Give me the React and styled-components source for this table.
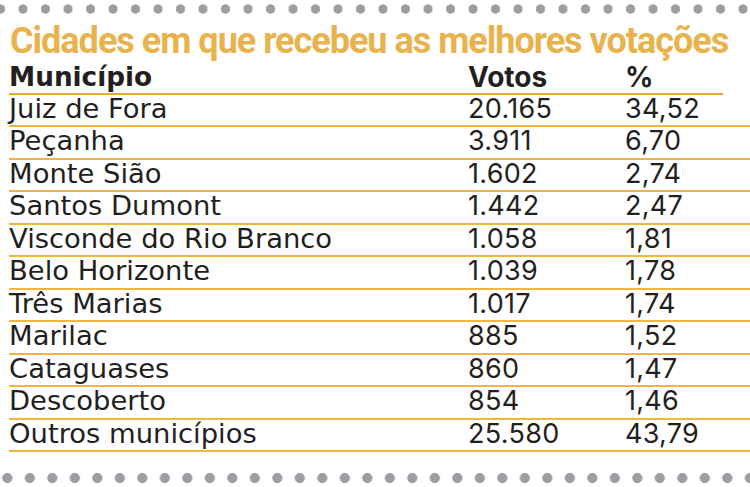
import styled, { createGlobalStyle } from "styled-components";

const GlobalStyle = createGlobalStyle`
  html, body {
    margin: 0;
    padding: 0;
    background: #ffffff;
  }
  body {
    font-family: Inter, "Liberation Sans", sans-serif;
    color: #231f20;
  }
`;

const rows = [
  { city: "Juiz de Fora", votes: "20.165", pct: "34,52" },
  { city: "Peçanha", votes: "3.911", pct: "6,70" },
  { city: "Monte Sião", votes: "1.602", pct: "2,74" },
  { city: "Santos Dumont", votes: "1.442", pct: "2,47" },
  { city: "Visconde do Rio Branco", votes: "1.058", pct: "1,81" },
  { city: "Belo Horizonte", votes: "1.039", pct: "1,78" },
  { city: "Três Marias", votes: "1.017", pct: "1,74" },
  { city: "Marilac", votes: "885", pct: "1,52" },
  { city: "Cataguases", votes: "860", pct: "1,47" },
  { city: "Descoberto", votes: "854", pct: "1,46" },
  { city: "Outros municípios", votes: "25.580", pct: "43,79" },
];

const App = () => {
  return (
    <Wrapper>
      <GlobalStyle />
      <Dots $offset={-10.75} $radius={4.9} />
      <Title>Cidades em que recebeu as melhores votações</Title>
      <Table>
        <HeadRow>
          <Cell $head>Município</Cell>
          <Cell $head $numeric>Votos</Cell>
          <Cell $head $numeric>%</Cell>
        </HeadRow>
        {rows.map((row) => {
          const { city, votes, pct } = row;

          return (
            <Row key={city}>
              <Cell>{city}</Cell>
              <Cell $numeric>{votes}</Cell>
              <Cell $numeric>{pct}</Cell>
            </Row>
          );
        })}
      </Table>
      <Dots $offset={-3.95} $radius={5.3} $bottom />
    </Wrapper>
  );
};

const Wrapper = styled.main`
  width: 750px;
  height: 487px;
  overflow: hidden;
`;

// gray dotted rule, top and bottom
const Dots = styled.div`
  height: 18px;
  margin-top: ${(p) => (p.$bottom ? "17px" : "0")};
  background-image: radial-gradient(
    circle at center,
    #9d9da3 ${(p) => p.$radius - 0.5}px,
    transparent ${(p) => p.$radius}px
  );
  background-size: 22.5px 18px;
  background-repeat: repeat-x;
  background-position: ${(p) => p.$offset}px 0;
`;

const Title = styled.h1`
  margin: 3px 0 0 10px;
  font-family: Roboto, "Liberation Sans", sans-serif;
  font-weight: 700;
  font-size: 36px;
  line-height: 40px;
  letter-spacing: -1px;
  color: #e8b34c;
  white-space: nowrap;
`;

const Table = styled.section`
  margin-left: 9px;
`;

const HeadRow = styled.div`
  display: grid;
  grid-template-columns: 459px 157px 1fr;
  width: 714px;
  line-height: 32px;
  border-bottom: 2px solid #e6ad33;
  white-space: nowrap;
`;

const Row = styled.div`
  display: grid;
  grid-template-columns: 459px 157px 1fr;
  line-height: 28.45px;
  padding-bottom: 2px;
  border-bottom: 2px solid #efb740;
  white-space: nowrap;
`;

const Cell = styled.span`
  font-family: ${(p) =>
    p.$numeric ? 'Inter, "Liberation Sans", sans-serif' : '"DejaVu Sans", Inter, sans-serif'};
  font-weight: ${(p) => (p.$head ? 700 : 400)};
  font-size: ${(p) => (p.$head ? (p.$numeric ? "28px" : "26.3px") : p.$numeric ? "27px" : "27.4px")};
  letter-spacing: ${(p) => (p.$numeric && !p.$head ? "0.3px" : "0")};
  color: #231f20;
`;

export default App;
